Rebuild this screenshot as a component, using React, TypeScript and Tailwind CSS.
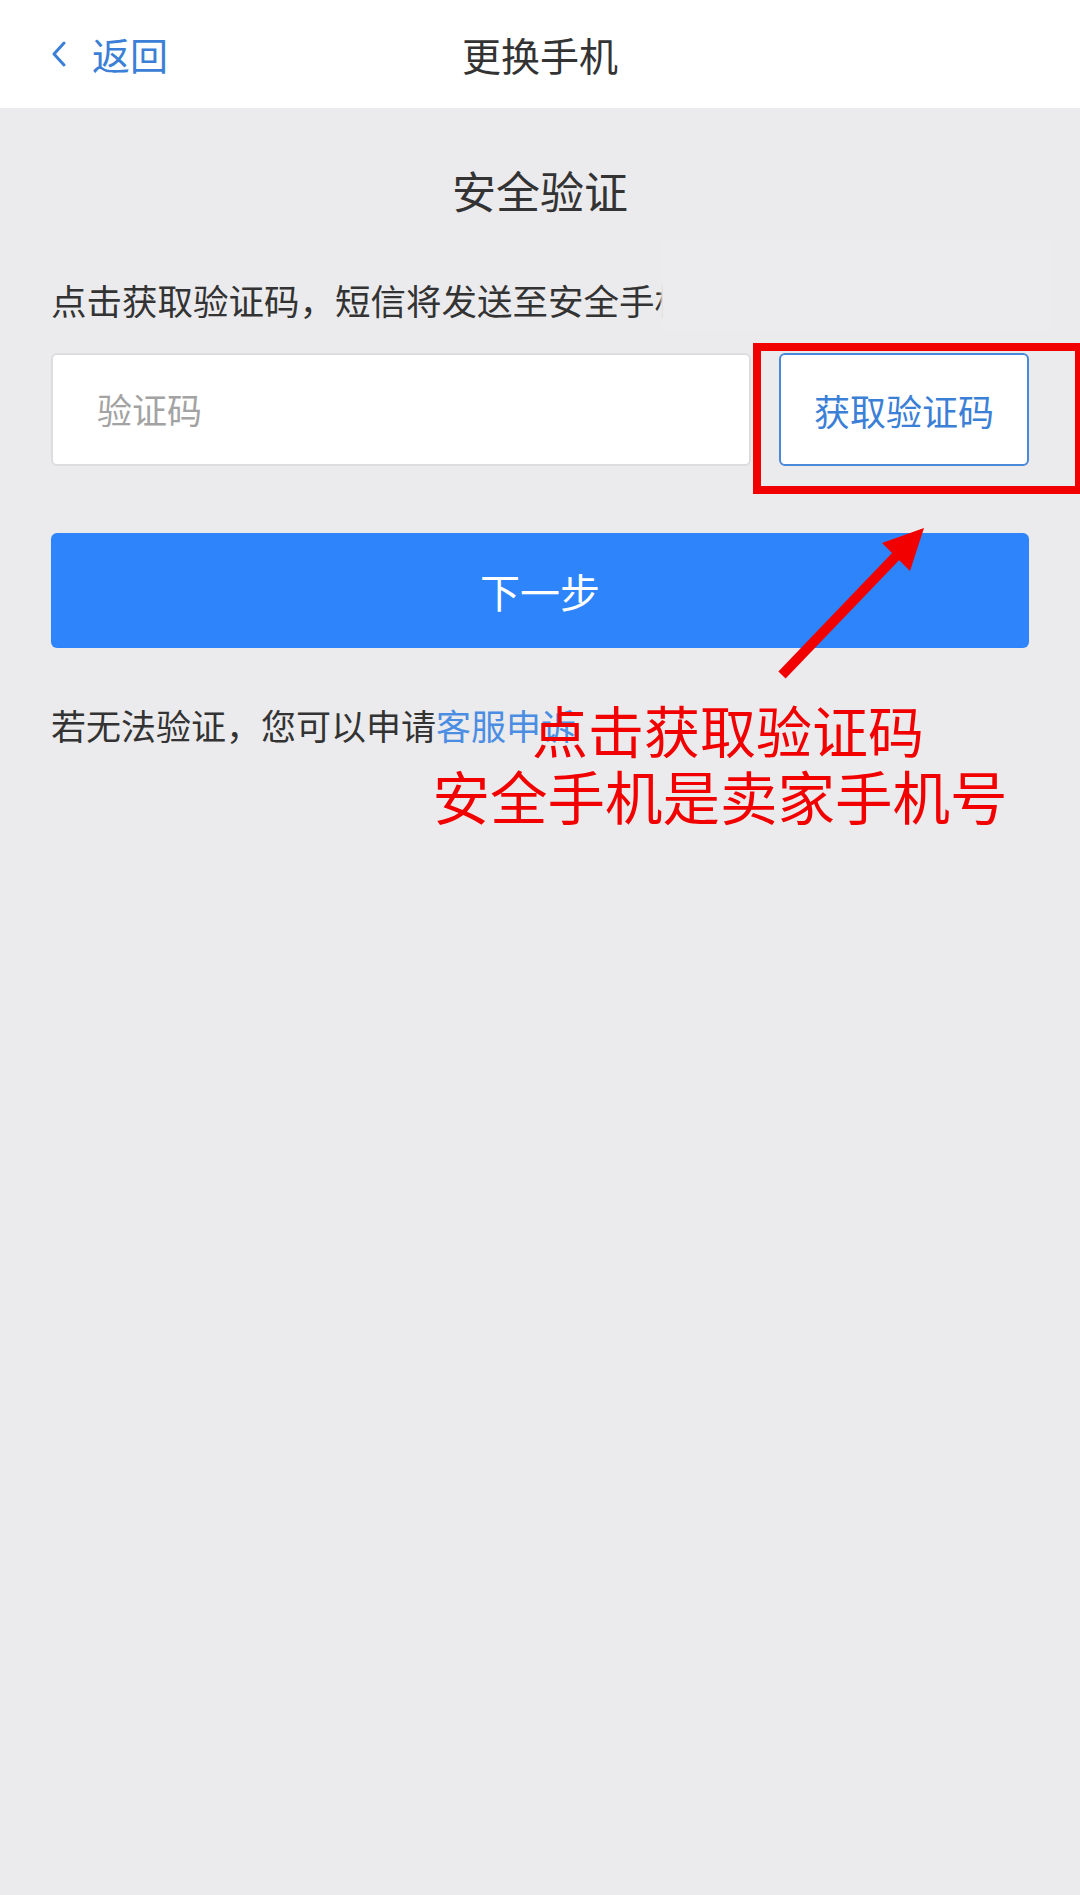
import React from "react";

const FONT = { fontFamily: '"Noto Sans CJK SC", "Noto Sans", sans-serif' };

function ChevronLeft() {
  return (
    <svg width="18" height="26" viewBox="0 0 18 26" className="shrink-0">
      <path d="M14 2 L4 13 L14 24" fill="none" stroke="#3b7fd6" strokeWidth="3" strokeLinecap="round" strokeLinejoin="round" />
    </svg>
  );
}

function Header() {
  return (
    <header className="grid h-[108px] grid-cols-3 items-center bg-white">
      <div className="flex items-center pl-[50px]">
        <ChevronLeft />
        <span className="ml-[24px] text-[38px] leading-none text-[#3b7fd6]">返回</span>
      </div>
      <div className="flex justify-center">
        <span className="whitespace-nowrap text-[39px] leading-none text-[#333333]">更换手机</span>
      </div>
      <div />
    </header>
  );
}

function Arrow() {
  return (
    <svg className="pointer-events-none absolute left-0 top-0" width="1080" height="900" viewBox="0 0 1080 900">
      <line x1="782" y1="675" x2="900" y2="552" stroke="#f20000" strokeWidth="10" />
      <polygon points="924,528 882,543 910,571" fill="#f20000" />
    </svg>
  );
}

export default function App() {
  return (
    <div className="relative min-h-[1895px] w-[1080px] overflow-hidden bg-[#ebebed]" style={FONT}>
      <Header />
      <main className="px-[51px] pt-[52px]">
        <h1 className="text-center text-[44px] leading-[60px] text-[#333333]">安全验证</h1>
        <p className="mt-[55px] whitespace-nowrap text-[35.5px] leading-[50px] text-[#333333]">
          点击获取验证码，短信将发送至安全手机
        </p>
        <div className="mt-[28px] flex h-[113px] gap-[28px]">
          <div className="flex flex-1 items-center rounded-[6px] border-2 border-[#dddddf] bg-white pl-[44px]">
            <span className="text-[35px] text-[#a3a3a3]">验证码</span>
          </div>
          <button className="flex w-[250px] items-center justify-center rounded-[6px] border-2 border-[#4a88da] bg-white text-[36px] text-[#3b7fd6]">
            获取验证码
          </button>
        </div>
        <button className="mt-[67px] flex h-[115px] w-full items-center justify-center rounded-[6px] bg-[#2e85fb] text-[40px] text-white">
          下一步
        </button>
        <p className="mt-[52px] text-[35px] leading-[50px] text-[#333333]">
          若无法验证，您可以申请<span className="text-[#4a8de2]">客服申诉</span>
        </p>
      </main>

      {/* masked phone number */}
      <div className="absolute left-[661px] top-[238px] h-[94px] w-[390px] bg-[#ececee] blur-[1px]" />

      {/* annotation frame around the code button */}
      <div className="absolute left-[753px] top-[343px] h-[151px] w-[330px] border-[8px] border-[#f20000]" />
      <Arrow />
      <div className="absolute left-[420px] top-[695px] w-[600px] text-center leading-[67px] text-[#f20000]">
        <div className="pl-[16px] text-[56px]">点击获取验证码</div>
        <div className="text-[57.5px]">安全手机是卖家手机号</div>
      </div>
    </div>
  );
}
